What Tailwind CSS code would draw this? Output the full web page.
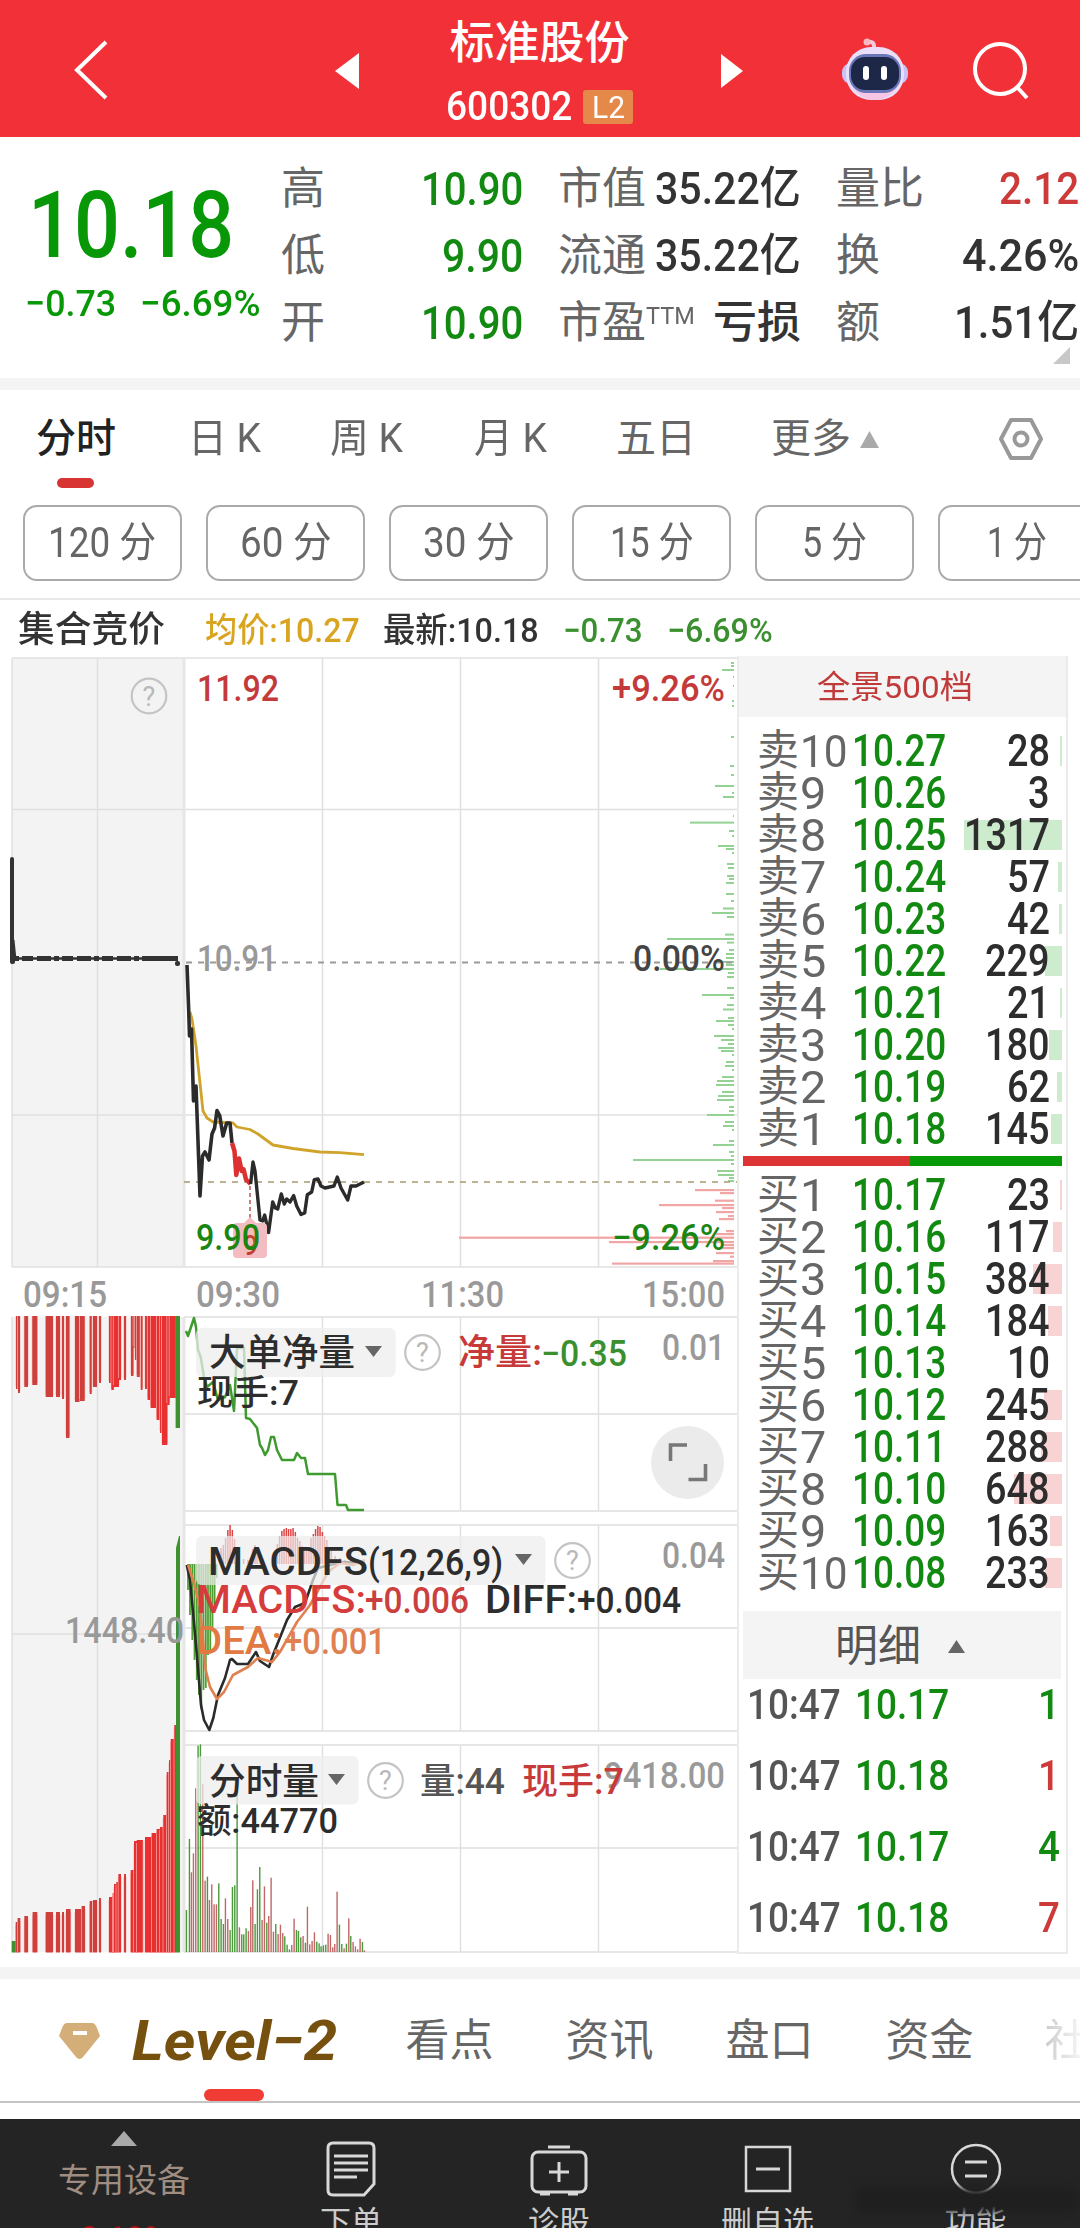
<!DOCTYPE html>
<html lang="zh-CN">
<head>
  <meta charset="UTF-8">
  <meta name="viewport" content="width=device-width,initial-scale=1.0">
  <title>标准股份 600302</title>
  <script src="https://cdn.jsdelivr.net/npm/@tailwindcss/browser@4"></script>
</head>
<body class="bg-white font-['Roboto','Noto_Sans_CJK_SC',sans-serif] leading-none text-[#333]">
  <div class="w-[1080px] h-[2228px] overflow-hidden flex flex-col whitespace-nowrap">

    <!-- Header -->
    <header class="h-[137px] shrink-0 bg-[#f13137] text-white flex items-center">
      <svg class="w-[40px] h-[64px] ml-[71px]" viewBox="0 0 40 64" fill="none" stroke="#fff" stroke-width="4"><path d="M35 5 L6 33 L35 61"/></svg>
      <svg class="w-[24px] h-[36px] ml-[224px] mt-[5px]" viewBox="0 0 24 36" fill="#fff"><path d="M24 0 V36 L0 18Z"/></svg>
      <div class="w-[363px] self-start pt-[21px] flex flex-col items-center pr-[2px]">
        <div class="text-[45px] font-medium h-[48px]">标准股份</div>
        <div class="flex items-center mt-[18px]">
          <span class="text-[40px] font-medium" data-w="126">600302</span>
          <span class="ml-[11px] w-[50px] h-[34px] bg-[#e5894a] rounded-[3px] flex items-center justify-center text-[31px]"><span data-w="33">L2</span></span>
        </div>
      </div>
      <svg class="w-[22px] h-[34px] mt-[5px] -ml-px" viewBox="0 0 22 34" fill="#fff"><path d="M0 0 V34 L22 17Z"/></svg>
      <!-- assistant robot -->
      <svg class="w-[68px] h-[64px] ml-[98px]" viewBox="0 0 68 64">
        <path d="M33 12 Q34 3 26 5" fill="none" stroke="#f5c9dc" stroke-width="4" stroke-linecap="round"/>
        <circle cx="26" cy="5" r="3.5" fill="#fbb9c4"/>
        <rect x="1" y="26" width="66" height="21" rx="9" fill="#c9c3f5"/>
        <rect x="5" y="10" width="58" height="53" rx="25" fill="#e9dffb"/>
        <path d="M9 45 Q18 63 34 63 Q50 63 59 45" fill="#f6c6e4"/>
        <rect x="8" y="17" width="52" height="39" rx="17" fill="#6a76b8"/>
        <rect x="10" y="20" width="48" height="33" rx="14" fill="#1d2747"/>
        <rect x="22" y="29" width="6" height="14" rx="3" fill="#fff"/>
        <rect x="40" y="29" width="6" height="14" rx="3" fill="#fff"/>
      </svg>
      <svg class="w-[60px] h-[60px] ml-[62px] mt-[5px]" viewBox="0 0 60 60" fill="none" stroke="#fff" stroke-width="4"><circle cx="29" cy="28" r="25"/><path d="M46 46 L56 57"/></svg>
    </header>

    <!-- Quote -->
    <section class="h-[241px] shrink-0 flex">
      <div class="w-[281px] text-[#079707]">
        <div class="text-[93px] font-medium h-[93px] mt-[42px] ml-[28px]"><span data-w="206">10.18</span></div>
        <div class="flex text-[37px] font-medium mt-[13px] ml-[25px]">
          <span data-w="91">−0.73</span><span class="ml-[24px]" data-w="120">−6.69%</span>
        </div>
      </div>
      <div class="w-[242px] pt-[18px] font-medium text-[46px] text-[#128a12]">
        <div class="h-[67px] flex items-center justify-between"><span class="text-[44px] font-normal text-[#666]">高</span><span data-w="102">10.90</span></div>
        <div class="h-[67px] flex items-center justify-between"><span class="text-[44px] font-normal text-[#666]">低</span><span data-w="81">9.90</span></div>
        <div class="h-[67px] flex items-center justify-between"><span class="text-[44px] font-normal text-[#666]">开</span><span data-w="102">10.90</span></div>
      </div>
      <div class="w-[243px] ml-[35px] pt-[18px] font-medium text-[45px]">
        <div class="h-[67px] flex items-center justify-between"><span class="text-[44px] font-normal text-[#666]">市值</span><span data-w="146">35.22亿</span></div>
        <div class="h-[67px] flex items-center justify-between"><span class="text-[44px] font-normal text-[#666]">流通</span><span data-w="146">35.22亿</span></div>
        <div class="h-[67px] flex items-center justify-between"><span class="text-[44px] font-normal text-[#666] flex">市盈<span class="text-[24px] mt-[3px]" data-w="49">TTM</span></span><span class="text-[44px]">亏损</span></div>
      </div>
      <div class="w-[243px] ml-[35px] pt-[18px] font-medium text-[45px]">
        <div class="h-[67px] flex items-center justify-between"><span class="text-[44px] font-normal text-[#666]">量比</span><span class="text-[#cc3a3a]" data-w="80">2.12</span></div>
        <div class="h-[67px] flex items-center justify-between"><span class="text-[44px] font-normal text-[#666]">换</span><span data-w="117">4.26%</span></div>
        <div class="h-[67px] flex items-center justify-between"><span class="text-[44px] font-normal text-[#666]">额</span><span data-w="125">1.51亿</span></div>
        <svg class="w-[17px] h-[17px] ml-[217px] -mt-[9px]" viewBox="0 0 17 17" fill="#c8c8c8"><path d="M17 0 V17 H0Z"/></svg>
      </div>
    </section>
    <div class="h-[12px] shrink-0 bg-[#f4f4f4]"></div>

    <!-- Period tabs -->
    <nav class="h-[98px] shrink-0 flex flex-col text-[40px] text-[#666]">
      <div class="flex items-center h-[98px] pl-[36px]">
        <span class="font-medium text-[#222]">分时</span>
        <span class="ml-[72px]" data-w="73">日 K</span>
        <span class="ml-[69px]" data-w="73">周 K</span>
        <span class="ml-[71px]" data-w="73">月 K</span>
        <span class="ml-[69px]">五日</span>
        <span class="ml-[75px]">更多</span>
        <svg class="ml-[9px] w-[19px] h-[17px]" viewBox="0 0 19 17" fill="#aaa"><path d="M9.500 0 L19 17 H0Z"/></svg>
        <svg class="ml-[119px] w-[46px] h-[44px]" viewBox="0 0 46 44" fill="none" stroke="#999" stroke-width="4" stroke-linejoin="round"><path d="M13 3 H33 L43 22 L33 41 H13 L3 22Z"/><circle cx="23" cy="22" r="6.500"/></svg>
      </div>
      <div class="-mt-[10px] ml-[57px] w-[37px] h-[10px] shrink-0 rounded-full bg-[#d93434]"></div>
    </nav>
    <div class="h-[112px] shrink-0 pt-[17px] pl-[23px] flex gap-[24px] border-b-2 border-[#e8e8e8] text-[42px] text-[#666]">
      <div class="w-[159px] h-[76px] shrink-0 border-2 border-[#aaa] rounded-[14px] flex items-center justify-center"><span data-w="108">120 分</span></div>
      <div class="w-[159px] h-[76px] shrink-0 border-2 border-[#aaa] rounded-[14px] flex items-center justify-center"><span data-w="92">60 分</span></div>
      <div class="w-[159px] h-[76px] shrink-0 border-2 border-[#aaa] rounded-[14px] flex items-center justify-center"><span data-w="92">30 分</span></div>
      <div class="w-[159px] h-[76px] shrink-0 border-2 border-[#aaa] rounded-[14px] flex items-center justify-center"><span data-w="84">15 分</span></div>
      <div class="w-[159px] h-[76px] shrink-0 border-2 border-[#aaa] rounded-[14px] flex items-center justify-center"><span data-w="65">5 分</span></div>
      <div class="w-[159px] h-[76px] shrink-0 border-2 border-[#aaa] rounded-[14px] flex items-center justify-center"><span data-w="60">1 分</span></div>
    </div>

    <!-- Legend -->
    <div class="h-[56px] shrink-0 flex items-center pl-[18px] pt-[4px] text-[34px] font-medium">
      <span class="text-[36px]" data-w="147">集合竞价</span>
      <span class="ml-[40px] text-[#d9a520]" data-w="155">均价:10.27</span>
      <span class="ml-[23px]" data-w="156">最新:10.18</span>
      <span class="ml-[25px] text-[#3a8f2f]" data-w="80">−0.73</span>
      <span class="ml-[24px] text-[#3a8f2f]" data-w="106">−6.69%</span>
    </div>

    <main class="h-[1311px] shrink-0 flex">
      <svg id="chart" class="w-[737px] h-[1300px] shrink-0" viewBox="0 656 737 1300"></svg>

      <!-- Order book -->
      <aside class="w-[331px] h-[1298px] border-2 border-t-0 border-[#ebebeb] flex flex-col">
        <div class="h-[61px] shrink-0 bg-[#f4f4f4] flex items-center justify-center text-[32px] text-[#c03a3a] pr-[16px]"><span data-w="156">全景500档</span></div>
        <div id="asks" class="mt-[13px]"></div>
        <div class="flex h-[10px] shrink-0 ml-[4px] mr-[4px] mt-[6px]"><div class="w-[167px] bg-[#dc3434]"></div><div class="flex-1 bg-[#089908]"></div></div>
        <div id="bids" class="mt-[8px]"></div>
        <div class="h-[68px] shrink-0 mt-[17px] ml-[4px] mr-[5px] bg-[#f4f4f4] flex items-center text-[43px] text-[#555] pt-[2px]">
          <span class="ml-[92px]">明细</span>
          <svg class="w-[17px] h-[13px] ml-[27px]" viewBox="0 0 17 13" fill="#666"><path d="M8.500 0 L17 13 H0Z"/></svg>
        </div>
        <div id="trades" class="-mt-[10px]"></div>
      </aside>
    </main>
    <div class="h-[12px] shrink-0 bg-[#f4f4f4]"></div>

    <!-- Content tabs -->
    <nav class="h-[124px] shrink-0 border-b-2 border-[#c4c4c4] flex flex-col">
      <div class="h-[122px] flex items-center text-[44px] text-[#666] pl-[59px] pt-[2px]">
        <svg class="w-[41px] h-[37px] shrink-0" viewBox="0 0 41 37"><path d="M8 0 H33 Q36 0 38 5 L41 13 L24 34 Q20.500 38 17 34 L0 13 L3 5 Q5 0 8 0Z" fill="#d3ae78"/><path d="M14 10 H28" stroke="#fff" stroke-width="4"/></svg>
        <span class="ml-[32px] text-[56px] italic font-bold text-[#76500f] font-['Roboto',sans-serif]" data-w="206">Level−2</span>
        <span class="ml-[68px] shrink-0">看点</span>
        <span class="ml-[72px] shrink-0">资讯</span>
        <span class="ml-[72px] shrink-0">盘口</span>
        <span class="ml-[72px] shrink-0">资金</span>
        <span class="ml-[71px] shrink-0 bg-linear-to-r from-[#ccc] to-white bg-clip-text text-transparent">社</span>
      </div>
      <div class="-mt-[12px] ml-[204px] w-[60px] h-[12px] shrink-0 rounded-full bg-[#f03c34]"></div>
    </nav>
    <div class="h-[16px] shrink-0"></div>

    <!-- Toolbar -->
    <footer class="relative h-[109px] shrink-0 bg-[#242424] text-[#ccc] text-[31px] flex overflow-hidden">
      <div class="w-[248px] h-[160px] flex flex-col items-center pt-[12px] text-[#9f8d82]">
        <svg class="w-[26px] h-[15px]" viewBox="0 0 26 15" fill="#aaa"><path d="M13 0 L26 15 H0Z"/></svg>
        <span class="mt-[18px] text-[33px]">专用设备</span>
        <span class="mt-[24px] text-[34px] font-medium text-[#b81010]" data-w="88">0.19%</span>
      </div>
      <div class="w-[206px] flex flex-col items-center pt-[22px]">
        <svg class="w-[50px] h-[56px] shrink-0" viewBox="0 0 50 56" fill="none" stroke="#d8d8d8" stroke-width="3"><path d="M7 2 H43 Q48 2 48 7 V43 L38 54 H7 Q2 54 2 49 V7 Q2 2 7 2Z"/><path d="M8 15 H42 M8 22 H42 M8 29 H42 M8 36 H31"/></svg>
        <span class="mt-[10px]">下单</span>
      </div>
      <div class="w-[210px] flex flex-col items-center pt-[22px]">
        <svg class="w-[58px] h-[56px] shrink-0" viewBox="0 0 58 56" fill="none" stroke="#d8d8d8" stroke-width="3"><path d="M18 6 H40"/><rect x="2" y="11" width="54" height="40" rx="6"/><path d="M10 53 H20 M38 53 H48 M29 21 V41 M19 31 H39"/></svg>
        <span class="mt-[10px]">诊股</span>
      </div>
      <div class="w-[207px] flex flex-col items-center pt-[22px]">
        <svg class="w-[50px] h-[56px] shrink-0" viewBox="0 0 50 56" fill="none" stroke="#d8d8d8" stroke-width="2.500"><rect x="3" y="6" width="44" height="44"/><path d="M13 28 H37" stroke-width="3"/></svg>
        <span class="mt-[10px]">删自选</span>
      </div>
      <div class="w-[209px] flex flex-col items-center pt-[22px]">
        <svg class="w-[54px] h-[56px] shrink-0" viewBox="0 0 54 56" fill="none" stroke="#d8d8d8" stroke-width="2.500"><circle cx="27" cy="28" r="24"/><path d="M16 21 H38 M16 35 H38" stroke-width="3"/></svg>
        <span class="mt-[10px]">功能</span>
      </div>
      <div class="absolute left-[855px] top-[69px] w-[222px] h-[24px] bg-[#1f1f1f] blur-[4px]"></div>
    </footer>
  </div>

  <script>
    // ---- order book ----
    const asks = [[10,'10.27',28],[9,'10.26',3],[8,'10.25',1317],[7,'10.24',57],[6,'10.23',42],[5,'10.22',229],[4,'10.21',21],[3,'10.20',180],[2,'10.19',62],[1,'10.18',145]];
    const bids = [[1,'10.17',23],[2,'10.16',117],[3,'10.15',384],[4,'10.14',184],[5,'10.13',10],[6,'10.12',245],[7,'10.11',288],[8,'10.10',648],[9,'10.09',163],[10,'10.08',233]];
    const trades = [['10:47','10.17',1,'text-[#128a12]'],['10:47','10.18',1,'text-[#cc3a3a]'],['10:47','10.17',4,'text-[#128a12]'],['10:47','10.18',7,'text-[#cc3a3a]']];

    const level = (side, bar) => ([n, price, vol]) => `
      <div class="relative h-[42px] flex items-center pl-[18px] pr-[16px]">
        <div class="absolute right-[4px] top-[6px] h-[30px] ${bar}" style="width:${vol < 15 ? 0 : vol / 1317 * 98}px"></div>
        <span class="relative w-[95px] flex items-center text-[#666]"><span class="text-[42px] w-[43px]">${side}</span><span class="text-[45px]" data-w="${n > 9 ? 48 : 26}">${n}</span></span>
        <span class="relative text-[44px] font-medium text-[#128a12]" data-w="94">${price}</span>
        <span class="relative ml-auto text-[44px] font-medium text-[#2d2d2d]" data-w="${String(vol).length * 21.5}">${vol}</span>
      </div>`;
    document.getElementById('asks').innerHTML = asks.map(level('卖', 'bg-[#cdebcd]')).join('');
    document.getElementById('bids').innerHTML = bids.map(level('买', 'bg-[#f8d3d3]')).join('');
    document.getElementById('trades').innerHTML = trades.map(([t, p, v, c]) => `
      <div class="h-[71px] flex items-center pl-[8px] pr-[6px] text-[42px] font-medium">
        <span class="text-[#555]" data-w="94">${t}</span>
        <span class="ml-[14px] text-[#128a12]" data-w="94">${p}</span>
        <span class="ml-auto ${c}" data-w="22">${v}</span>
      </div>`).join('');

    const fit = el => {
      const w = +el.dataset.w, nat = el.offsetWidth;
      if (!nat) return;
      el.style.transform = `scaleX(${w / nat})`;
      el.style.marginRight = (w - nat) + 'px';
    };
    const watcher = new ResizeObserver(list => list.forEach(e => fit(e.target)));
    document.querySelectorAll('[data-w]').forEach(el => {
      el.style.display = 'inline-block';
      el.style.flexShrink = 0;
      el.style.transformOrigin = '0 50%';
      fit(el);
      watcher.observe(el);
    });
    window.addEventListener('load', () => document.querySelectorAll('[data-w]').forEach(fit));

    // ---- charts ----
    const out = [];
    const rect = (x, y, w, h, fill, extra = '') => out.push(`<rect x="${x}" y="${y}" width="${w}" height="${h}" fill="${fill}" ${extra}/>`);
    const line = (x1, y1, x2, y2, c = '#e0e0e0', w = 1.5, extra = '') => out.push(`<path d="M${x1} ${y1} L${x2} ${y2}" stroke="${c}" stroke-width="${w}" ${extra}/>`);
    const poly = (pts, c, w) => out.push(`<polyline points="${pts}" fill="none" stroke="${c}" stroke-width="${w}" stroke-linejoin="round"/>`);
    const text = (x, y, w, s, c, size = 36, weight = 500) => out.push(`<text x="${x}" y="${y}" textLength="${w}" lengthAdjust="spacingAndGlyphs" font-size="${size}" font-weight="${weight}" fill="${c}">${s}</text>`);
    const help = (x, y) => out.push(`<circle cx="${x}" cy="${y}" r="17.300" fill="none" stroke="#c4c4c4" stroke-width="2.200"/><text x="${x}" y="${y + 9.5}" text-anchor="middle" font-size="27" fill="#b8b8b8">?</text>`);
    const drop = (x, y) => out.push(`<path d="M${x} ${y} h17 l-8.500 11z" fill="#666"/>`);

    // grid
    rect(12, 658, 172, 609, '#f3f3f3');
    rect(12, 1317, 172, 635, '#f3f3f3');
    [658, 809.6, 1115, 1267].forEach(y => line(12, y, 737, y));
    [1317, 1414, 1511, 1525, 1628, 1731, 1745, 1848, 1952].forEach(y => line(184, y, 737, y, '#e6e6e6', 2));
    line(12, 1634, 184, 1634);
    [[658, 1267], [1317, 1511], [1525, 1731], [1745, 1952]].forEach(([a, b]) => [322.5, 460.5, 598.5].forEach(x => line(x, a, x, b)));
    [[658, 1267], [1317, 1952]].forEach(([a, b]) => { line(97.5, a, 97.5, b); line(12, a, 12, b); line(184, a, 184, b, '#e6e6e6', 3); });

    // price distribution
    [[663,3],[666,3],[670,12],[677,1],[686,1],[701,2],[706,2],[737,3],[766,4],[775,3],[786,19],[793,2],[797,11],[816,1],[822.6,44],[831,5],[836,2],[846,16],[849,8],[853,2],[864,7],[868,6],[876,7],[879,5],[883,8],[894,8],[901,3],[908.5,11],[913,22],[917,7],[934.6,9],[939,67],[942.6,7],[950,5],[954,8],[958,8],[962,20],[965,8],[969,74],[973,6],[977,7],[988,7],[995,32],[998,4],[1005,7],[1009.5,11],[1018,6],[1021,18],[1025,6],[1029,2],[1036,20],[1040,13],[1044,6],[1048,16],[1051,13],[1055,2],[1062,8],[1066,9],[1070,2],[1077,12],[1081,17],[1085,18],[1092,12],[1096,16],[1100,17],[1107,5],[1111,5],[1115,27],[1122,9],[1126,11],[1130,2],[1141,5],[1145,21],[1152,5],[1156,3],[1160,101],[1164,3],[1171,17],[1175,16],[1178,5],[1181,6]]
      .forEach(([y, w]) => rect(734 - w, y - 1, w, 2, '#93d293'));
    [[1190,39],[1193,14],[1200.6,19],[1205,75],[1208,12],[1212,18],[1216,6],[1219,15],[1231,8],[1234,18],[1237.6,275],[1242,125],[1245,12],[1248,12],[1253,18],[1256.6,4],[1261,21],[1263.5,122]]
      .forEach(([y, w]) => rect(734 - w, y - 1, w, 2.2, '#f2a5a5'));

    line(186, 962.5, 737, 962.5, '#999', 1.8, 'stroke-dasharray="6 6"');
    line(184, 1182, 737, 1182, '#a59a70', 1.6, 'stroke-dasharray="6 6"');

    // auction
    line(12, 859, 12, 960, '#333', 4, 'stroke-linecap="round"');
    line(13, 940, 15, 960, '#333', 3);
    line(14, 958.5, 178, 958.5, '#333', 2.5);
    line(14, 958.5, 178, 958.5, '#333', 5, 'stroke-dasharray="5 3 11 4 14 3"');
    line(145, 958.5, 178, 958.5, '#333', 5);
    rect(175, 961, 5, 5, '#333', 'rx="2"');
    rect(10, 959, 5, 5, '#333', 'rx="2"');

    // price and average
    poly('190,1012 192,1019 196,1046 203,1111 207,1118 213,1122 233,1123 237,1127 250,1129.5 258,1134 273,1145 293,1148.5 320,1152 340,1152.6 364,1154.7', '#d0a42c', 2.8);
    poly('187,965 188.7,1010 189.5,1036 191.5,1029 193.5,1101 196,1086 200,1196 202.5,1156 205,1152 209,1160 212,1134 214.6,1128 217,1110.5 219.7,1115.6 223,1136 226.7,1123 230,1123 232,1143', '#2b2b2b', 3.6);
    poly('232,1143 234.5,1151 236.3,1175 239,1158.5 241.7,1171 243.6,1169.5 246,1179.5 250.6,1184', '#dd3030', 4.5);
    poly('250.6,1184 253,1162 255,1171 260,1220 262.7,1221 264.7,1215 268.6,1232.6 272.7,1202 275.3,1208 277.7,1209 281.3,1194 284.3,1204 286.7,1199 290,1202 293.7,1195.6 296.7,1206 301,1214.5 304.7,1213 307.3,1194.7 311.7,1192 314.3,1179.6 318,1179 321,1186 325,1188 334,1186 337.3,1177 341,1188 347.7,1200 351,1186 356,1186 364,1182', '#2b2b2b', 3.4);
    line(250, 1186, 250, 1220, '#b55', 1.5, 'stroke-dasharray="4 3"');
    out.push('<path d="M237 1223 H244 L250 1217 L256 1223 H263 Q267 1223 267 1227 V1254 Q267 1258 263 1258 H237 Q233 1258 233 1254 V1227 Q233 1223 237 1223Z" fill="#f3bcc0"/>');
    text(243, 1255, 15, '9', '#c04030', 28, 500);

    help(149, 696);
    text(197, 701, 82, '11.92', '#c43a3a');
    text(612, 701, 113, '+9.26%', '#c43a3a');
    text(197, 971, 80, '10.91', '#999');
    text(633, 971, 92, '0.00%', '#444');
    text(196, 1250, 64, '9.90', '#1a8512');
    text(612, 1250, 113, '−9.26%', '#1a8512');
    text(23, 1307, 84, '09:15', '#999');
    text(196, 1307, 84, '09:30', '#999');
    text(421, 1307, 83, '11:30', '#999');
    text(642, 1307, 83, '15:00', '#999');

    // auction volume, unmatched part hangs from the top
    [[16,2.5,1389],[18,2,1393],[24.3,3.7,1387],[32.3,5,1385],[45.7,7.3,1397],[56,4,1397],[62,2,1399],[66,3.5,1438],[75,4.5,1402],[80,4.7,1401],[89.7,2,1394],[93,4,1387],[99,2,1383],[109,2.5,1383],[111.3,2.5,1390],[113.5,5.5,1387],[118.6,2.4,1380],[124,2,1380],[131,2.5,1376],[133.4,1.8,1348],[135,2,1360],[136.8,3,1377],[140.8,1.8,1390],[145,2,1389],[147.6,3.2,1400],[150.6,6.2,1408],[156.6,3.6,1420],[160,2.2,1433],[162,5.4,1445],[167.2,2.4,1405],[169.4,6.4,1398]]
      .forEach(([x, w, b]) => { rect(x - .6, 1316, w + 1.2, b - 1318, '#f6c4c0'); rect(x, 1316, w, b - 1316, x > 146 || x > 108 && x < 122 ? '#e83030' : '#cf3f3c'); });
    rect(175.6, 1316, 4.4, 112, '#3f9130');
    [[15.7,2,1922],[17.6,2.7,1918],[24.3,3.7,1916],[32.6,4.7,1912],[45.7,7.3,1912],[56,4,1912],[62,2,1912],[66,4.6,1909],[75,6.5,1909],[81.6,3.4,1906],[89.7,2.7,1901],[93,4,1900],[99,2,1898],[109,4,1897],[112.6,2,1893],[114,2.6,1884],[116.3,2.2,1882],[118.4,2.6,1874],[124,2,1874],[130.7,3.4,1870],[134,3,1841],[136.7,6.3,1840],[145,6.8,1837],[151.6,5.2,1833],[156.6,3.6,1829],[160,3.5,1827],[163.3,3.6,1815],[166.7,2.6,1772],[169,2,1760],[170.7,3.8,1739],[174.3,1.8,1725]]
      .forEach(([x, w, t]) => { rect(x - .6, t + 3, w + 1.2, 1949 - t, '#f6c4c0'); rect(x, t, w, 1952.5 - t, x > 130 || x > 108 && x < 122 ? '#e83030' : '#cf3f3c'); });
    rect(11.7, 1941, 4, 11.5, '#3f9130');
    out.push('<path d="M176 1952.500 V1548 L179 1536 H180 V1952.500Z" fill="#3f9130"/>');
    line(143.3, 1841, 143.3, 1952, '#f6c4c0', 1);
    text(65, 1643, 119, '1448.40', '#999');

    // net big orders
    poly('186,1331 188,1336 191,1327 194,1318 196,1327 198,1350 200.7,1357 204,1377 207,1387 213,1382 218,1400 225,1397 230,1385 234,1411 237,1348 244,1348 246,1418 250,1419 257,1428 260,1445 262,1448 265,1455 268,1450 271,1437 274,1437 277,1450 282,1460 294,1460 297,1453 301,1458 305,1458 308,1474 335,1474 337.5,1505 346,1505 348,1510 364,1510', '#3f9a30', 2.5);
    rect(196, 1328, 199.6, 49, '#ededed', 'rx="6" opacity=".75"');
    text(209, 1366, 146, '大单净量', '#2d2d2d', 37);
    drop(365, 1346);
    help(422.5, 1352.5);
    text(458, 1365, 84, '净量:', '#c83a3a', 36);
    text(541, 1366, 86, '−0.35', '#3a8f2f');
    text(662, 1360, 63, '0.01', '#999');
    text(197, 1405, 102, '现手:7', '#2d2d2d', 35);
    out.push('<circle cx="687.500" cy="1462.500" r="36.500" fill="#ebebeb"/><path d="M687 1445 H670.500 V1461 M705.500 1464 V1479.500 H688.500" fill="none" stroke="#777" stroke-width="3.600"/>');

    // MACD histogram
    [[221,1548],[223.3,1545],[225.5,1538],[227.8,1530],[230,1525],[232.3,1530],[234.5,1539],[236.8,1556],[239,1558],[243.5,1559],[248,1560],[252.5,1549],[255,1545],[257,1550],[259.5,1556],[262,1558],[275,1552],[277.3,1544],[279.5,1536],[281.8,1531],[284,1529],[286.3,1528],[288.5,1529],[290.8,1529],[293,1528],[295.3,1532],[297.5,1538],[299.8,1541],[302,1546],[304.3,1551],[306.5,1551],[308.8,1547],[311,1538],[313.3,1534],[315.5,1529],[317.8,1526],[320,1527],[322.3,1532],[324.5,1536],[326.8,1540],[329,1547],[331.3,1551],[335,1556],[340,1558],[345,1560],[352,1557]]
      .forEach(([x, t]) => rect(x - .7, t, 1.5, 1564 - t, '#dc4444'));
    [[188,1590],[190,1615],[192.3,1640],[194.5,1660],[196.8,1680],[199,1695],[201.3,1709],[203.5,1690],[205.8,1688],[208,1655],[210.3,1650],[212.5,1630],[214.6,1605],[216.6,1578]]
      .forEach(([x, b]) => rect(x - .9, 1564, 1.8, b - 1564, '#4f9e35'));
    poly('186.7,1565 190,1580 194,1623 196.7,1653 201,1705 204,1720 209.3,1730 213.3,1718 218,1695 225,1678 230,1660 232,1659 237,1664 248,1664 252,1658 256,1652 260,1661 269,1667 273,1655 287,1620 295,1607 305,1603 313,1580 318,1568 330,1565 342,1562 365,1563', '#2b2b2b', 2.6);
    poly('188,1565 194,1583 200,1607 205.7,1670 210,1687 217,1699 224,1692 233,1675 248,1667 258,1658 272,1662 280,1652 297,1622 310,1605 320,1587 328,1572 340,1563 353,1565 365,1560', '#e08050', 2.6);
    rect(196, 1536, 349.6, 49, '#ededed', 'rx="6" opacity=".7"');
    text(208, 1575, 160, 'MACDFS', '#2d2d2d', 38);
    text(368, 1575, 135, '(12,26,9)', '#2d2d2d', 36);
    drop(515, 1554);
    help(572.5, 1560.5);
    text(662, 1568, 63, '0.04', '#999');
    text(196, 1613, 170, 'MACDFS:', '#d63c3c', 38);
    text(365, 1613, 104, '+0.006', '#cc3f3f', 36);
    text(485, 1613, 92, 'DIFF:', '#2d2d2d', 38);
    text(577, 1613, 104, '+0.004', '#2d2d2d', 36);
    text(196, 1654, 86, 'DEA:', '#e27842', 38);
    text(284, 1654, 102, '+0.001', '#e08050', 36);

    // minute volume
    const g = '#4a9a3c', r = '#c06868';
    const vols = [[559,870,g],[568,657,g],[574,757,r],[580,700,r],[587,505,r],[594,377,g],[601,373,g],[608,492,r],[615,782,r],[622,770,g],[628,840,r],[635,793,r],[642,853,r],[649,853,r],[656,790,g],[663,897,g],[670,912,g],[676,835,r],[683,897,r],[690,930,g],[697,801,g],[704,796,g],[711,500,g],[718,922,r],[725,943,g],[731,943,g],[738,925,g],[745,933,r],[752,861,r],[758,781,r],[765,912,g],[772,808,g],[779,741,g],[786,900,r],[793,799,r],[800,908,g],[806,888,r],[813,773,r],[820,935,r],[827,912,g],[834,942,r],[841,914,r],[848,939,r],[854,949,g],[861,974,g],[868,988,g],[875,975,r],[882,896,r],[889,930,g],[895,933,g],[902,952,g],[909,948,r],[916,968,g],[922,860,r],[929,973,r],[936,963,r],[943,937,r],[950,965,g],[957,970,g],[963,979,g],[970,976,g],[977,974,g],[984,941,r],[991,945,r],[998,982,r],[1004,972,r],[1011,815,r],[1018,914,g],[1025,972,g],[1032,985,r],[1039,971,g],[1046,895,r],[1052,948,g],[1059,966,r],[1066,979,r],[1073,988,r],[1080,956,r],[1087,966,g],[1093,991,r]];
    vols.forEach(([x, t, c]) => rect(x / 3 - .6, 1620 + t / 3, 1.4, (996 - t) / 3, c));
    rect(196, 1756, 162.5, 48.5, '#ededed', 'rx="6" opacity=".75"');
    text(209, 1795, 110, '分时量', '#2d2d2d', 37);
    drop(328, 1774);
    help(385.5, 1780.5);
    text(604, 1788, 121, '9418.00', '#999');
    text(420, 1794, 85, '量:44', '#555', 36);
    text(522, 1794, 102, '现手:7', '#c83a3a', 36);
    text(197, 1833, 141, '额:44770', '#2d2d2d', 35);

    document.getElementById('chart').innerHTML = out.join('');
  </script>
</body>
</html>
